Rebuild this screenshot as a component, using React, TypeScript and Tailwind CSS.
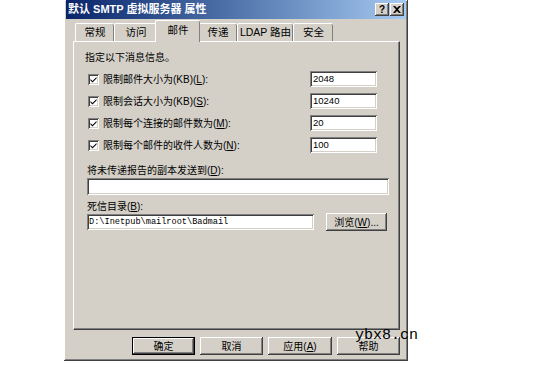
const cjk = "font-['Liberation_Sans','Noto_Sans_CJK_SC',sans-serif]";

const raised =
  "shadow-[inset_-1px_-1px_#404040,inset_1px_1px_#ffffff,inset_-2px_-2px_#808080,inset_2px_2px_#d4d0c8]";
const sunken =
  "shadow-[inset_1px_1px_#808080,inset_-1px_-1px_#ffffff,inset_2px_2px_#404040,inset_-2px_-2px_#d4d0c8]";

function Check() {
  return (
    <div className={`w-[11px] h-[11px] bg-white ${sunken} flex items-center justify-center`}>
      <svg width="7" height="7" viewBox="0 0 7 7">
        <path d="M0.5 3 L2.5 5 L6.5 1 L6.5 2.6 L2.5 6.6 L0.5 4.6 Z" fill="#000" />
      </svg>
    </div>
  );
}

function TextBox({ value, className = "" }: { value: string; className?: string }) {
  return (
    <div
      className={`bg-white ${sunken} flex items-center pl-[3px] text-[9.5px] text-black font-['Liberation_Sans',sans-serif] ${className}`}
    >
      {value}
    </div>
  );
}

function Btn({ children, primary = false, className = "" }: { children: React.ReactNode; primary?: boolean; className?: string }) {
  return (
    <div
      className={`bg-[#d4d0c8] flex items-center justify-center text-[10px] text-black ${
        primary ? "border border-black" : ""
      } ${raised} ${className}`}
    >
      {children}
    </div>
  );
}

const limits = [
  { label: "限制邮件大小为(KB)(", key: "L", tail: "):", value: "2048" },
  { label: "限制会话大小为(KB)(", key: "S", tail: "):", value: "10240" },
  { label: "限制每个连接的邮件数为(", key: "M", tail: "):", value: "20" },
  { label: "限制每个邮件的收件人数为(", key: "N", tail: "):", value: "100" },
];

const tabs = [
  { name: "常规", w: "w-[39px]" },
  { name: "访问", w: "w-[43px]" },
  { name: "邮件", w: "w-[41px]", active: true },
  { name: "传递", w: "w-[39px]" },
  { name: "LDAP 路由", w: "w-[56px]" },
  { name: "安全", w: "w-[40px]" },
];

export default function App() {
  return (
    <div className={`relative w-[533px] h-[366px] bg-white overflow-hidden ${cjk}`}>
      <div className={`ml-[64px] w-[344px] h-[361px] bg-[#d4d0c8] ${raised} flex flex-col`}>
        {/* title bar */}
        <div className="mx-[2px] h-[19px] flex items-center justify-between pl-[2px] pr-[2px] bg-gradient-to-r from-[#0a246a] to-[#a6caf0]">
          <span className="text-white font-bold text-[11px] leading-none whitespace-pre">默认 SMTP 虚拟服务器 属性</span>
          <div className="flex gap-[1px]">
            <div className={`w-[14px] h-[13px] bg-[#d4d0c8] ${raised} flex items-center justify-center text-[10px] font-bold leading-none text-black`}>
              ?
            </div>
            <div className={`w-[14px] h-[13px] bg-[#d4d0c8] ${raised} flex items-center justify-center`}>
              <svg width="8" height="7" viewBox="0 0 8 7">
                <path d="M0 0 H2 L4 2 L6 0 H8 L5 3.5 L8 7 H6 L4 5 L2 7 H0 L3 3.5 Z" fill="#000" />
              </svg>
            </div>
          </div>
        </div>

        {/* tabs */}
        <div className="ml-[11px] h-[22px] flex items-end">
          {tabs.map((t) =>
            t.active ? (
              <div
                key={t.name}
                className="relative z-10 -mx-[2px] mb-[-1px] w-[45px] h-[22px] bg-[#d4d0c8] border-l border-t border-white rounded-t-[2px] shadow-[inset_-1px_0_#808080] flex items-start justify-center pt-[2px] text-[10.5px] text-black"
              >
                {t.name}
              </div>
            ) : (
              <div
                key={t.name}
                className={`${t.w} h-[18px] bg-[#d4d0c8] border-l border-t border-white rounded-t-[2px] shadow-[inset_-1px_0_#808080] flex items-center justify-center text-[10.5px] text-black`}
              >
                {t.name}
              </div>
            )
          )}
        </div>

        {/* panel */}
        <div className="ml-[9px] w-[327px] h-[289px] border-l border-t border-white shadow-[inset_-1px_-1px_#808080] border-r border-b border-r-[#404040] border-b-[#404040] flex flex-col pl-[11px] text-[10px] text-black">
          <div className="mt-[10px] h-[12px] leading-[12px]">指定以下消息信息。</div>
          <div className="mt-[4px] flex flex-col">
            {limits.map((l) => (
              <div key={l.key} className="h-[22px] flex items-center">
                <div className="ml-[3px]">
                  <Check />
                </div>
                <span className="ml-[4px] flex-1">
                  {l.label}
                  <u>{l.key}</u>
                  {l.tail}
                </span>
                <TextBox value={l.value} className="w-[67px] h-[16px] mr-[22px]" />
              </div>
            ))}
          </div>
          <div className="mt-[9px] ml-[2px] h-[12px] leading-[12px]">
            将未传递报告的副本发送到(<u>D</u>):
          </div>
          <TextBox value="" className="mt-[1px] ml-[2px] w-[302px] h-[17px]" />
          <div className="mt-[6px] ml-[2px] h-[12px] leading-[12px]">
            死信目录(<u>B</u>):
          </div>
          <div className="ml-[2px] flex items-center">
            <div className={`w-[227px] h-[16px] bg-white ${sunken} flex items-center pl-[2px] text-[8.6px] font-['Liberation_Mono',monospace]`}>
              D:\Inetpub\mailroot\Badmail
            </div>
            <Btn className="ml-[12px] w-[61px] h-[18px]">
              浏览(<u>W</u>)...
            </Btn>
          </div>
        </div>

        {/* buttons */}
        <div className="mt-[7px] mr-[8px] flex justify-end gap-[5px]">
          <Btn primary className="w-[63px] h-[18px]">确定</Btn>
          <Btn className="w-[63px] h-[18px]">取消</Btn>
          <Btn className="w-[64px] h-[18px]">
            应用(<u>A</u>)
          </Btn>
          <Btn className="w-[63px] h-[18px]">帮助</Btn>
        </div>
      </div>

      {/* watermark */}
      <div className="absolute left-[355px] top-[327px] text-[15px] leading-[18px] text-black font-['Liberation_Mono',monospace]">
        ybx8.cn
      </div>
    </div>
  );
}
